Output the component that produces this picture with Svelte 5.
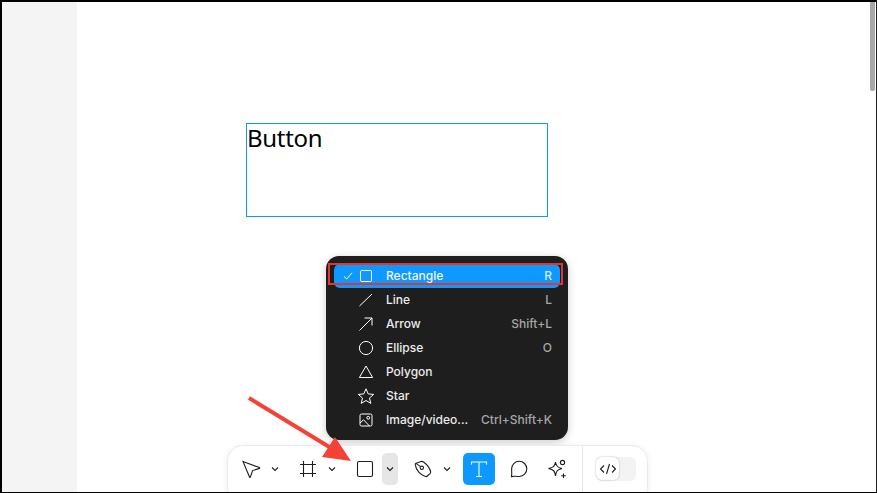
<script>
    const items = [
        { name: 'Rectangle', key: 'R', icon: 'rect', selected: true },
        { name: 'Line', key: 'L', icon: 'line' },
        { name: 'Arrow', key: 'Shift+L', icon: 'arrow' },
        { name: 'Ellipse', key: 'O', icon: 'ellipse' },
        { name: 'Polygon', key: '', icon: 'polygon' },
        { name: 'Star', key: '', icon: 'star' },
        { name: 'Image/video...', key: 'Ctrl+Shift+K', icon: 'image' }
    ];
</script>

<div class="frame">
    <aside class="side"></aside>
    <main class="canvas">
        <div class="textbox">Button</div>
    </main>
    <div class="scrollbar"></div>

    <div class="menu">
        {#each items as item}
            <div class="item" class:selected={item.selected}>
                <span class="check">
                    {#if item.selected}
                        <svg width="10" height="10" viewBox="0 0 10 10"><path d="M1 5.4 L3.7 8 L9 1.8" /></svg>
                    {/if}
                </span>
                <svg class="shape" width="18" height="18" viewBox="0 0 18 18">
                    {#if item.icon === 'rect'}
                        <rect x="3.5" y="3.5" width="11" height="11" rx="1.2" />
                    {:else if item.icon === 'line'}
                        <path d="M2.5 15 L15 3" />
                    {:else if item.icon === 'arrow'}
                        <path d="M2.5 15.5 L15 3 M7.5 3 H15 V10.5" />
                    {:else if item.icon === 'ellipse'}
                        <circle cx="9" cy="9" r="6.6" />
                    {:else if item.icon === 'polygon'}
                        <path d="M9 3 L15.6 14.5 H2.4 Z" />
                    {:else if item.icon === 'star'}
                        <path d="M9 1.8 L11.2 6.9 L16.7 7.4 L12.5 11 L13.8 16.4 L9 13.5 L4.2 16.4 L5.5 11 L1.3 7.4 L6.8 6.9 Z" />
                    {:else}
                        <rect x="3" y="3" width="12" height="12" rx="1.5" />
                        <circle cx="11.2" cy="6.8" r="1.4" />
                        <path d="M3 12 L6.5 8.8 L12.5 15" />
                    {/if}
                </svg>
                <span class="name">{item.name}</span>
                <span class="key">{item.key}</span>
            </div>
        {/each}
    </div>
    <div class="highlight"></div>

    <div class="toolbar">
        <div class="tools">
            <button class="tool">
                <svg width="20" height="20" viewBox="0 0 20 20"><path d="M2 2.5 L18.5 8.6 C18.9 8.8 18.9 9.3 18.5 9.4 L11.6 11.6 L9.4 18 C9.2 18.5 8.7 18.5 8.5 18 Z" /></svg>
            </button>
            <button class="chev">
                <svg width="8" height="6" viewBox="0 0 8 6"><path d="M1 1.5 L4 4.5 L7 1.5" /></svg>
            </button>
            <button class="tool gap">
                <svg width="18" height="18" viewBox="0 0 18 18"><path d="M4.5 1 V17 M13.5 1 V17 M1 4.5 H17 M1 13.5 H17" /></svg>
            </button>
            <button class="chev">
                <svg width="8" height="6" viewBox="0 0 8 6"><path d="M1 1.5 L4 4.5 L7 1.5" /></svg>
            </button>
            <button class="tool gap">
                <svg width="18" height="18" viewBox="0 0 18 18"><rect x="1.5" y="1.5" width="15" height="15" rx="1.6" /></svg>
            </button>
            <button class="chev open">
                <svg width="8" height="6" viewBox="0 0 8 6"><path d="M1 1.5 L4 4.5 L7 1.5" /></svg>
            </button>
            <button class="tool gap">
                <svg width="18" height="18" viewBox="0 0 18 18"><path d="M1.2 4.4 C1.2 3.8 1.5 3.4 2 3.2 L7 1.5 C8 1.2 8.8 1.5 9.5 2 C12.5 4.2 15.5 7.5 16.6 11.5 C16.8 12.2 16.6 12.8 16.2 13.3 L13.3 16 C12.8 16.5 12.2 16.7 11.5 16.5 C7 15.2 2 11 1.2 4.4 Z" /><circle cx="7.8" cy="7.8" r="1.7" /><path d="M2 3.4 L6.6 6.6" /></svg>
            </button>
            <button class="chev after-pen">
                <svg width="8" height="6" viewBox="0 0 8 6"><path d="M1 1.5 L4 4.5 L7 1.5" /></svg>
            </button>
            <button class="tool active">
                <svg width="18" height="18" viewBox="0 0 18 18"><path d="M1.5 4.5 V2 H16.5 V4.5 M9 2 V16.5 M6 16.5 H12" /></svg>
            </button>
            <button class="tool comment">
                <svg width="18" height="18" viewBox="0 0 18 18"><path d="M1.5 17 L4.5 16.6 C5.5 16.6 6.5 16.9 9.3 16.9 A7.6 7.6 0 1 0 1.6 9.3 C1.6 12 2 14 1.5 17 Z" transform="translate(0 -0.4)" /></svg>
            </button>
            <button class="tool spark">
                <svg width="22" height="22" viewBox="0 0 22 22">
                    <path d="M8.5 4 C9 8 10.5 9.5 15 10.5 C10.5 11.5 9 13 8.5 18 C8 13 6.5 11.5 1.5 10.5 C6.5 9.5 8 8 8.5 4 Z" />
                    <circle cx="15.5" cy="4.5" r="2.1" />
                    <path d="M16.5 15.5 V20 M14.2 17.8 H18.8" />
                </svg>
            </button>
        </div>
        <div class="toggle">
            <div class="knob">
                <svg width="18" height="12" viewBox="0 0 18 12"><path d="M5 2.5 L1.5 6 L5 9.5 M13 2.5 L16.5 6 L13 9.5 M10.5 1 L7.5 11" /></svg>
            </div>
        </div>
    </div>

    <svg class="pointer" width="120" height="80" viewBox="0 0 120 80">
        <path class="shaft" d="M6 5 L88 55" />
        <path class="head" d="M92 44 L108 68 L79 64 Z" />
    </svg>
</div>

<style>
    :global(body) {
        background: #ffffff;
    }

    .frame {
        position: relative;
        display: flex;
        width: 877px;
        height: 493px;
        box-sizing: border-box;
        border-top: 2px solid #000;
        border-left: 2px solid #000;
        border-right: 1px solid #222;
        border-bottom: 1px solid #000;
        overflow: hidden;
        background: #fff;
        font-family: Inter, "Liberation Sans", sans-serif;
    }

    .side {
        width: 75px;
        background: #f4f4f4;
        flex: none;
    }

    .canvas {
        position: relative;
        flex: 1;
    }

    .textbox {
        position: absolute;
        left: 169px;
        top: 121px;
        width: 302px;
        height: 94px;
        box-sizing: border-box;
        border: 1px solid #0d99ff;
        font-family: "Noto Sans", sans-serif;
        font-size: 24px;
        letter-spacing: -0.3px;
        line-height: 28px;
        color: #000;
    }

    .scrollbar {
        position: absolute;
        right: 1px;
        top: 0;
        width: 5px;
        height: 89px;
        background: #a8a8a8;
        border-radius: 0 0 2px 2px;
    }

    .menu {
        position: absolute;
        left: 324px;
        top: 254px;
        width: 242px;
        height: 184px;
        box-sizing: border-box;
        padding: 8px;
        background: #1e1e1e;
        border-radius: 13px;
        box-shadow: 0 2px 8px rgba(0, 0, 0, 0.2);
    }

    .item {
        display: flex;
        align-items: center;
        height: 24px;
        border-radius: 6px;
        color: #ececec;
        font-size: 12px;
        font-weight: 500;
    }

    .item.selected {
        background: #0d99ff;
        color: #f4f4f4;
    }

    .check {
        display: flex;
        width: 23px;
        padding-left: 9px;
        box-sizing: border-box;
    }

    .check svg path {
        fill: none;
        stroke: #fff;
        stroke-width: 1;
    }

    .shape {
        flex: none;
        fill: none;
        stroke: #fff;
        stroke-width: 1;
    }

    .name {
        margin-left: 11px;
        flex: 1;
        padding-bottom: 2px;
    }

    .key {
        margin-right: 8px;
        padding-bottom: 2px;
        color: #a6a6a6;
    }

    .selected .key {
        color: #d6ebfb;
    }

    .highlight {
        position: absolute;
        left: 326px;
        top: 261px;
        width: 235px;
        height: 22px;
        box-sizing: border-box;
        border: 2px solid #e8352b;
    }

    .toolbar {
        position: absolute;
        left: 225px;
        top: 443px;
        width: 421px;
        height: 60px;
        box-sizing: border-box;
        display: flex;
        align-items: flex-start;
        padding-top: 7px;
        background: #fff;
        border: 1px solid #ececec;
        border-radius: 16px;
        box-shadow: 0 1px 6px rgba(0, 0, 0, 0.08);
    }

    .tools {
        display: flex;
        padding-left: 7px;
        padding-right: 8px;
        height: 46px;
        margin-top: -7px;
        padding-top: 7px;
        align-items: flex-start;
        border-right: 1px solid #e6e6e6;
    }

    button {
        display: flex;
        flex: none;
        align-items: center;
        justify-content: center;
        height: 32px;
        padding: 0;
        border: none;
        border-radius: 5px;
        background: transparent;
    }

    button svg {
        fill: none;
        stroke: #1e1e1e;
        stroke-width: 1.1;
    }

    .tool {
        width: 32px;
    }

    .tool.gap {
        margin-left: 9px;
    }

    .tool.comment {
        margin-left: 8px;
    }

    .tool.spark {
        margin-left: 7px;
    }

    .chev {
        width: 16px;
    }

    .chev.open {
        margin-left: 1px;
        background: #e6e6e6;
    }

    .chev.after-pen {
        margin-right: 8px;
    }

    .tool.active {
        background: #0d99ff;
    }

    .tool.active svg {
        stroke: #fff;
    }

    .toggle {
        margin: 4px 0 0 13px;
        width: 40px;
        height: 24px;
        background: #f3f3f3;
        border-radius: 6px;
    }

    .knob {
        display: flex;
        align-items: center;
        justify-content: center;
        width: 23px;
        height: 23px;
        background: #fff;
        border-radius: 6px;
        box-shadow: 0 0 2px rgba(0, 0, 0, 0.3);
    }

    .knob svg {
        fill: none;
        stroke: #1e1e1e;
        stroke-width: 1.1;
    }

    .pointer {
        position: absolute;
        left: 241px;
        top: 391px;
    }

    .shaft {
        fill: none;
        stroke: #f44336;
        stroke-width: 4;
    }

    .head {
        fill: #f44336;
    }
</style>
